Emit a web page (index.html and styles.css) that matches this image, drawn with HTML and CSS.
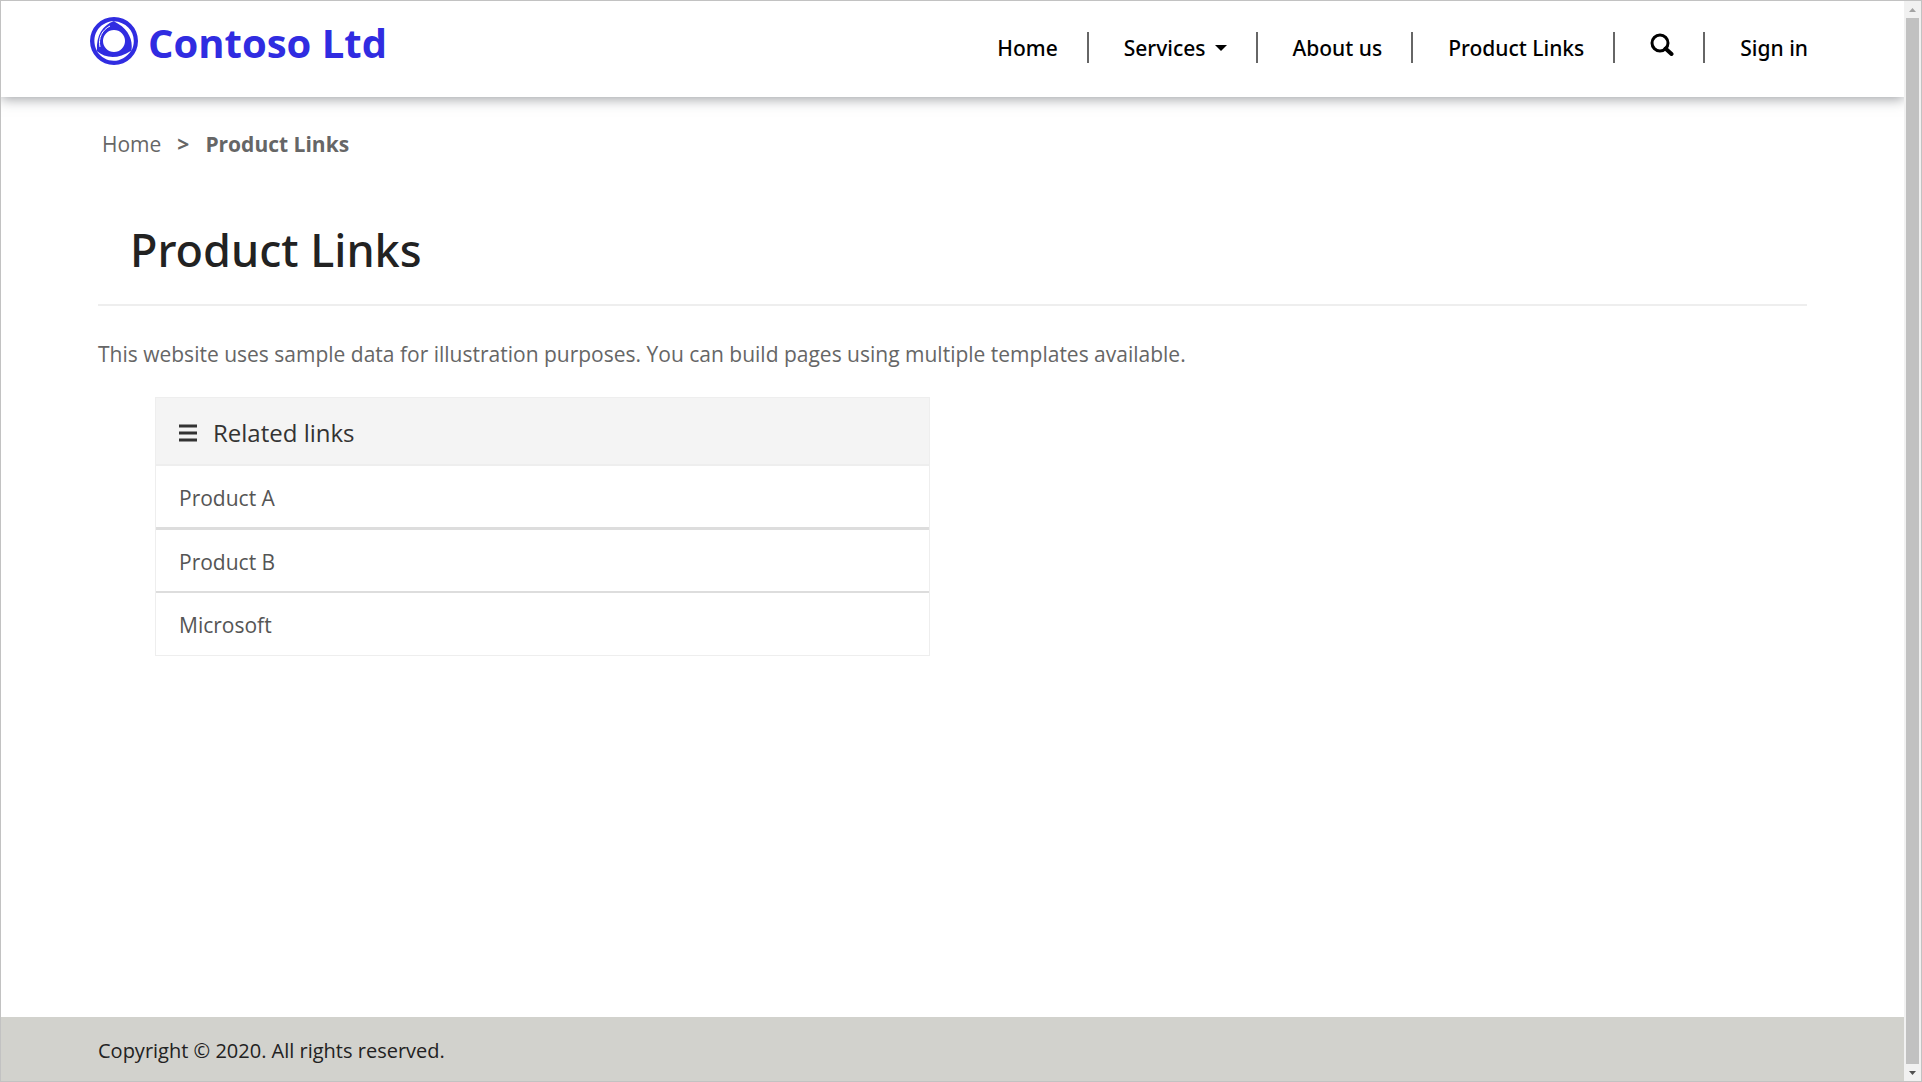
FILE: index.html
```html
<!DOCTYPE html>
<html lang="en">
<head>
<meta charset="utf-8">
<title>Product Links - Contoso Ltd</title>
<link rel="stylesheet" href="styles.css">
</head>
<body>
<div class="window">
  <div class="page">
    <header class="header">
      <a class="brand" href="#">
        <svg class="brand-mark" viewBox="0 0 48 48" aria-hidden="true">
          <path fill="currentColor" fill-rule="evenodd" d="M24 0A24 24 0 1 1 24 48A24 24 0 1 1 24 0ZM24 13A11 11 0 1 0 24 35A11 11 0 1 0 24 13Z"/>
          <defs>
            <g id="swirl">
              <path fill="#fff" d="M7 34C0 20 8 5 24 4C13 8 6 18 7 34Z"/>
            </g>
          </defs>
          <path fill="none" stroke="#fff" stroke-width="1" d="M10 30C8 21 12 13 20 9"/>
          <use href="#swirl"/>
          <use href="#swirl" transform="rotate(120 24 24)"/>
          <use href="#swirl" transform="rotate(240 24 24)"/>
        </svg>
        <span class="brand-name">Contoso Ltd</span>
      </a>
      <nav class="nav" aria-label="Main">
        <a class="nav-item" href="#">Home</a>
        <button class="nav-item" type="button">Services<span class="caret"></span></button>
        <a class="nav-item" href="#">About us</a>
        <a class="nav-item" href="#">Product Links</a>
        <button class="nav-item nav-search" type="button" aria-label="Search">
          <svg class="search-icon" viewBox="0 0 24 24" aria-hidden="true">
            <circle cx="10" cy="11" r="8" fill="none" stroke="currentColor" stroke-width="3"/>
            <path d="M15.500 16.500L21.500 22" fill="none" stroke="currentColor" stroke-width="4" stroke-linecap="round"/>
          </svg>
        </button>
        <a class="nav-item" href="#">Sign in</a>
      </nav>
    </header>
    <main class="main">
      <nav class="breadcrumb" aria-label="Breadcrumb">
        <a href="#">Home</a>
        <span class="breadcrumb-current">&gt;</span>
        <span class="breadcrumb-current">Product Links</span>
      </nav>
      <h1 class="title">Product Links</h1>
      <p class="intro">This website uses sample data for illustration purposes. You can build pages using multiple templates available.</p>
      <div class="columns">
        <section class="panel">
          <h2 class="panel-title">
            <svg class="list-icon" viewBox="0 0 18 18" aria-hidden="true"><path d="M0 2H18M0 9H18M0 16H18" stroke="currentColor" stroke-width="3"/></svg>
            Related links
          </h2>
          <a class="panel-link" href="#">Product A</a>
          <a class="panel-link" href="#">Product B</a>
          <a class="panel-link" href="#">Microsoft</a>
        </section>
      </div>
    </main>
    <footer class="footer">Copyright © 2020. All rights reserved.</footer>
  </div>
  <div class="scrollbar" aria-hidden="true">
    <svg class="scroll-arrow scroll-arrow-off" viewBox="0 0 17 17"><path d="M5 11L8.500 7L12 11Z" fill="currentColor"/></svg>
    <div class="scroll-thumb"></div>
    <svg class="scroll-arrow" viewBox="0 0 17 17"><path d="M5 7L8.500 11L12 7Z" fill="currentColor"/></svg>
  </div>
</div>
</body>
</html>
```
FILE: styles.css
```css
* {
  box-sizing: border-box;
}

body {
  margin: 0;
  background: #fff;
  color: #666;
  font-family: "Segoe UI", "Open Sans", "Noto Sans", sans-serif;
  font-size: 21px;
  line-height: 32px;
}

a {
  color: inherit;
  text-decoration: none;
}

.window {
  display: flex;
  min-height: 100vh;
  border: 1px solid #c2c2c2;
}

.page {
  flex: 1;
  display: flex;
  flex-direction: column;
}

.header {
  display: flex;
  justify-content: space-between;
  align-items: flex-start;
  height: 96px;
  padding: 16px 96px 0 89px;
  box-shadow: 0 2px 12px rgba(60, 64, 72, 0.5);
  clip-path: inset(0 0 -20px 0);
}

.brand {
  display: flex;
  align-items: flex-start;
  gap: 10px;
  color: #302ce1;
  font-size: 40px;
  font-weight: 700;
  line-height: 48px;
}

.brand-mark {
  width: 48px;
  height: 48px;
}

.brand-name {
  padding-top: 2px;
}

.nav {
  display: flex;
  align-items: center;
  padding-top: 15px;
}

.nav-item {
  display: flex;
  align-items: center;
  height: 31px;
  padding: 0 29px 0 35px;
  border: 0;
  border-right: 2px solid #666;
  background: none;
  color: #000;
  font-family: "Segoe UI", "Noto Sans", sans-serif;
  font-size: 21px;
  font-weight: 500;
}

.nav-item:last-child {
  padding-right: 0;
  border-right: 0;
}

.nav-search {
  align-items: flex-start;
}

.caret {
  margin-left: 9px;
  border: 6px solid transparent;
  border-top-color: currentColor;
  border-bottom: 0;
}

.search-icon {
  width: 24px;
  height: 24px;
}

.main {
  flex: 1;
  padding: 31px 97px;
}

.breadcrumb {
  display: flex;
  gap: 16px;
  padding-left: 4px;
}

.breadcrumb-current {
  font-weight: 700;
}

.title {
  margin: 0 0 32px;
  padding: 58px 0 22px 32px;
  border-bottom: 2px solid #eee;
  color: #222;
  font-family: "Segoe UI", "Noto Sans", sans-serif;
  font-size: 45px;
  font-weight: 500;
  line-height: 64px;
}

.intro {
  margin: 0;
}

.columns {
  display: grid;
  grid-template-columns: 1fr 1fr;
  margin-top: 27px;
}

.panel {
  margin: 0 23px 0 57px;
  border: 1px solid #eee;
}

.panel-title {
  display: flex;
  align-items: center;
  gap: 16px;
  margin: 0;
  padding: 19px 23px 15px;
  border-bottom: 2px solid #eee;
  background: #f4f4f4;
  color: #333;
  font-size: 24px;
  font-weight: 400;
}

.list-icon {
  width: 18px;
  height: 18px;
}

.panel-link {
  display: block;
  padding: 16px 23px 13px;
  color: #555;
}

.panel-link + .panel-link {
  border-top: 2px solid #ddd;
}

.panel-title + .panel-link {
  border-bottom: 1px solid #ddd;
}

.panel-link:last-child {
  padding-bottom: 14px;
}

.footer {
  padding: 18px 97px 14px;
  background: #d2d2cd;
  color: #222;
  font-size: 20px;
}

.scrollbar {
  display: flex;
  flex-direction: column;
  width: 17px;
  background: #f1f1f1;
}

.scroll-arrow {
  width: 17px;
  height: 17px;
  color: #505050;
}

.scroll-arrow-off {
  color: #a3a3a3;
}

.scroll-thumb {
  flex: 1;
  margin: 0 2px;
  background: #c1c1c1;
}
```
